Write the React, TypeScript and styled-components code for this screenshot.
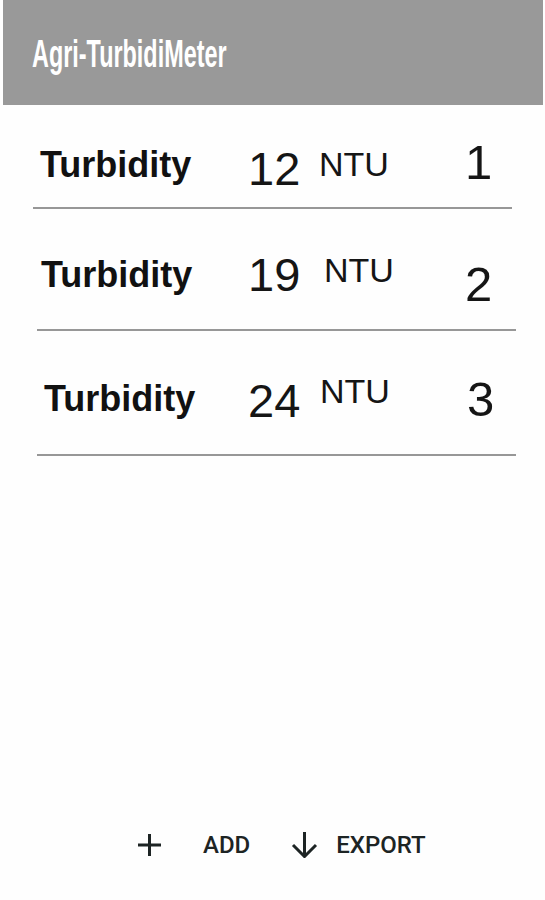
import React from "react";
import styled, { createGlobalStyle } from "styled-components";

const GlobalStyle = createGlobalStyle`
  html, body {
    margin: 0;
    padding: 0;
    background: #ffffff;
  }
  body {
    font-family: "Liberation Sans", Arial, sans-serif;
  }
`;

const Screen = styled.div`
  min-height: 900px;
  display: flex;
  flex-direction: column;
  background: #fefefe;
`;

const AppBar = styled.header`
  height: 105px;
  margin: 0 2px 0 3px;
  background: #999999;
  box-sizing: border-box;
  padding: 34px 0 0 29px;
`;

const Title = styled.h1`
  margin: 0;
  font-family: "Liberation Sans", Arial, sans-serif;
  font-weight: 700;
  font-size: 39px;
  line-height: 1;
  color: #ffffff;
  white-space: nowrap;
  transform: scaleX(0.6);
  transform-origin: left top;
`;

const List = styled.div`
  display: flex;
  flex-direction: column;
`;

type Offsets = { label: number; value: number; unit: number; index: number };

const Row = styled.div<{ $left: number; $height: number; $cols: string; $pad: number }>`
  display: grid;
  grid-template-columns: ${(p) => p.$cols};
  align-items: start;
  margin-left: ${(p) => p.$left}px;
  width: 479px;
  height: ${(p) => p.$height}px;
  padding-left: ${(p) => p.$pad}px;
  box-sizing: border-box;
  border-bottom: 2px solid #979797;
`;

const Label = styled.span<{ $top: number }>`
  margin-top: ${(p) => p.$top}px;
  font-weight: 700;
  font-size: 36px;
  line-height: 1;
  color: #111111;
  white-space: nowrap;
`;

const Value = styled.span<{ $top: number }>`
  margin-top: ${(p) => p.$top}px;
  font-size: 47px;
  line-height: 1;
  color: #151515;
`;

const Unit = styled.span<{ $top: number }>`
  margin-top: ${(p) => p.$top}px;
  font-size: 34px;
  line-height: 1;
  color: #151515;
`;

const Index = styled.span<{ $top: number }>`
  margin-top: ${(p) => p.$top}px;
  font-size: 49px;
  line-height: 1;
  color: #151515;
`;

const Spacer = styled.div`
  flex: 1;
`;

const Footer = styled.footer`
  height: 40px;
  margin-bottom: 35px;
  display: flex;
  align-items: center;
  padding-left: 137px;
`;

const ActionButton = styled.button<{ $gap: number }>`
  display: flex;
  align-items: center;
  gap: ${(p) => p.$gap}px;
  padding: 0;
  border: none;
  background: transparent;
  font-family: Roboto, "Liberation Sans", sans-serif;
  font-weight: 500;
  font-size: 24px;
  line-height: 1;
  color: #1d2424;
  cursor: pointer;
  & + & {
    margin-left: 41px;
  }
`;

const PlusIcon = () => (
  <svg width="25" height="24" viewBox="0 0 25 24" fill="none" stroke="#1d2424" strokeWidth="3" strokeLinecap="butt">
    <line x1="12.5" y1="1" x2="12.5" y2="23" />
    <line x1="1" y1="12" x2="24" y2="12" />
  </svg>
);

const ArrowDownIcon = () => (
  <svg width="27" height="26" viewBox="0 0 27 26" fill="none" stroke="#1d2424" strokeWidth="3" strokeLinejoin="miter">
    <line x1="13.5" y1="0" x2="13.5" y2="24" />
    <polyline points="2,13 13.5,24.5 25,13" />
  </svg>
);

type Reading = {
  value: number;
  index: number;
  left: number;
  height: number;
  pad: number;
  cols: string;
  top: Offsets;
};

const readings: Reading[] = [
  { value: 12, index: 1, left: 33, height: 104, pad: 7, cols: "208px 71px 146px 1fr", top: { label: 42, value: 40, unit: 42, index: 33 } },
  { value: 19, index: 2, left: 37, height: 122, pad: 4, cols: "207px 76px 141px 1fr", top: { label: 48, value: 42, unit: 44, index: 51 } },
  { value: 24, index: 3, left: 37, height: 125, pad: 7, cols: "204px 72px 147px 1fr", top: { label: 50, value: 46, unit: 43, index: 44 } },
];

export default function App() {
  return (
    <>
      <GlobalStyle />
      <Screen>
        <AppBar>
          <Title>Agri-TurbidiMeter</Title>
        </AppBar>
        <List>
          {readings.map((r) => (
            <Row key={r.index} $left={r.left} $height={r.height} $cols={r.cols} $pad={r.pad}>
              <Label $top={r.top.label}>Turbidity</Label>
              <Value $top={r.top.value}>{r.value}</Value>
              <Unit $top={r.top.unit}>NTU</Unit>
              <Index $top={r.top.index}>{r.index}</Index>
            </Row>
          ))}
        </List>
        <Spacer />
        <Footer>
          <ActionButton $gap={41}>
            <PlusIcon />
            ADD
          </ActionButton>
          <ActionButton $gap={18}>
            <ArrowDownIcon />
            EXPORT
          </ActionButton>
        </Footer>
      </Screen>
    </>
  );
}
